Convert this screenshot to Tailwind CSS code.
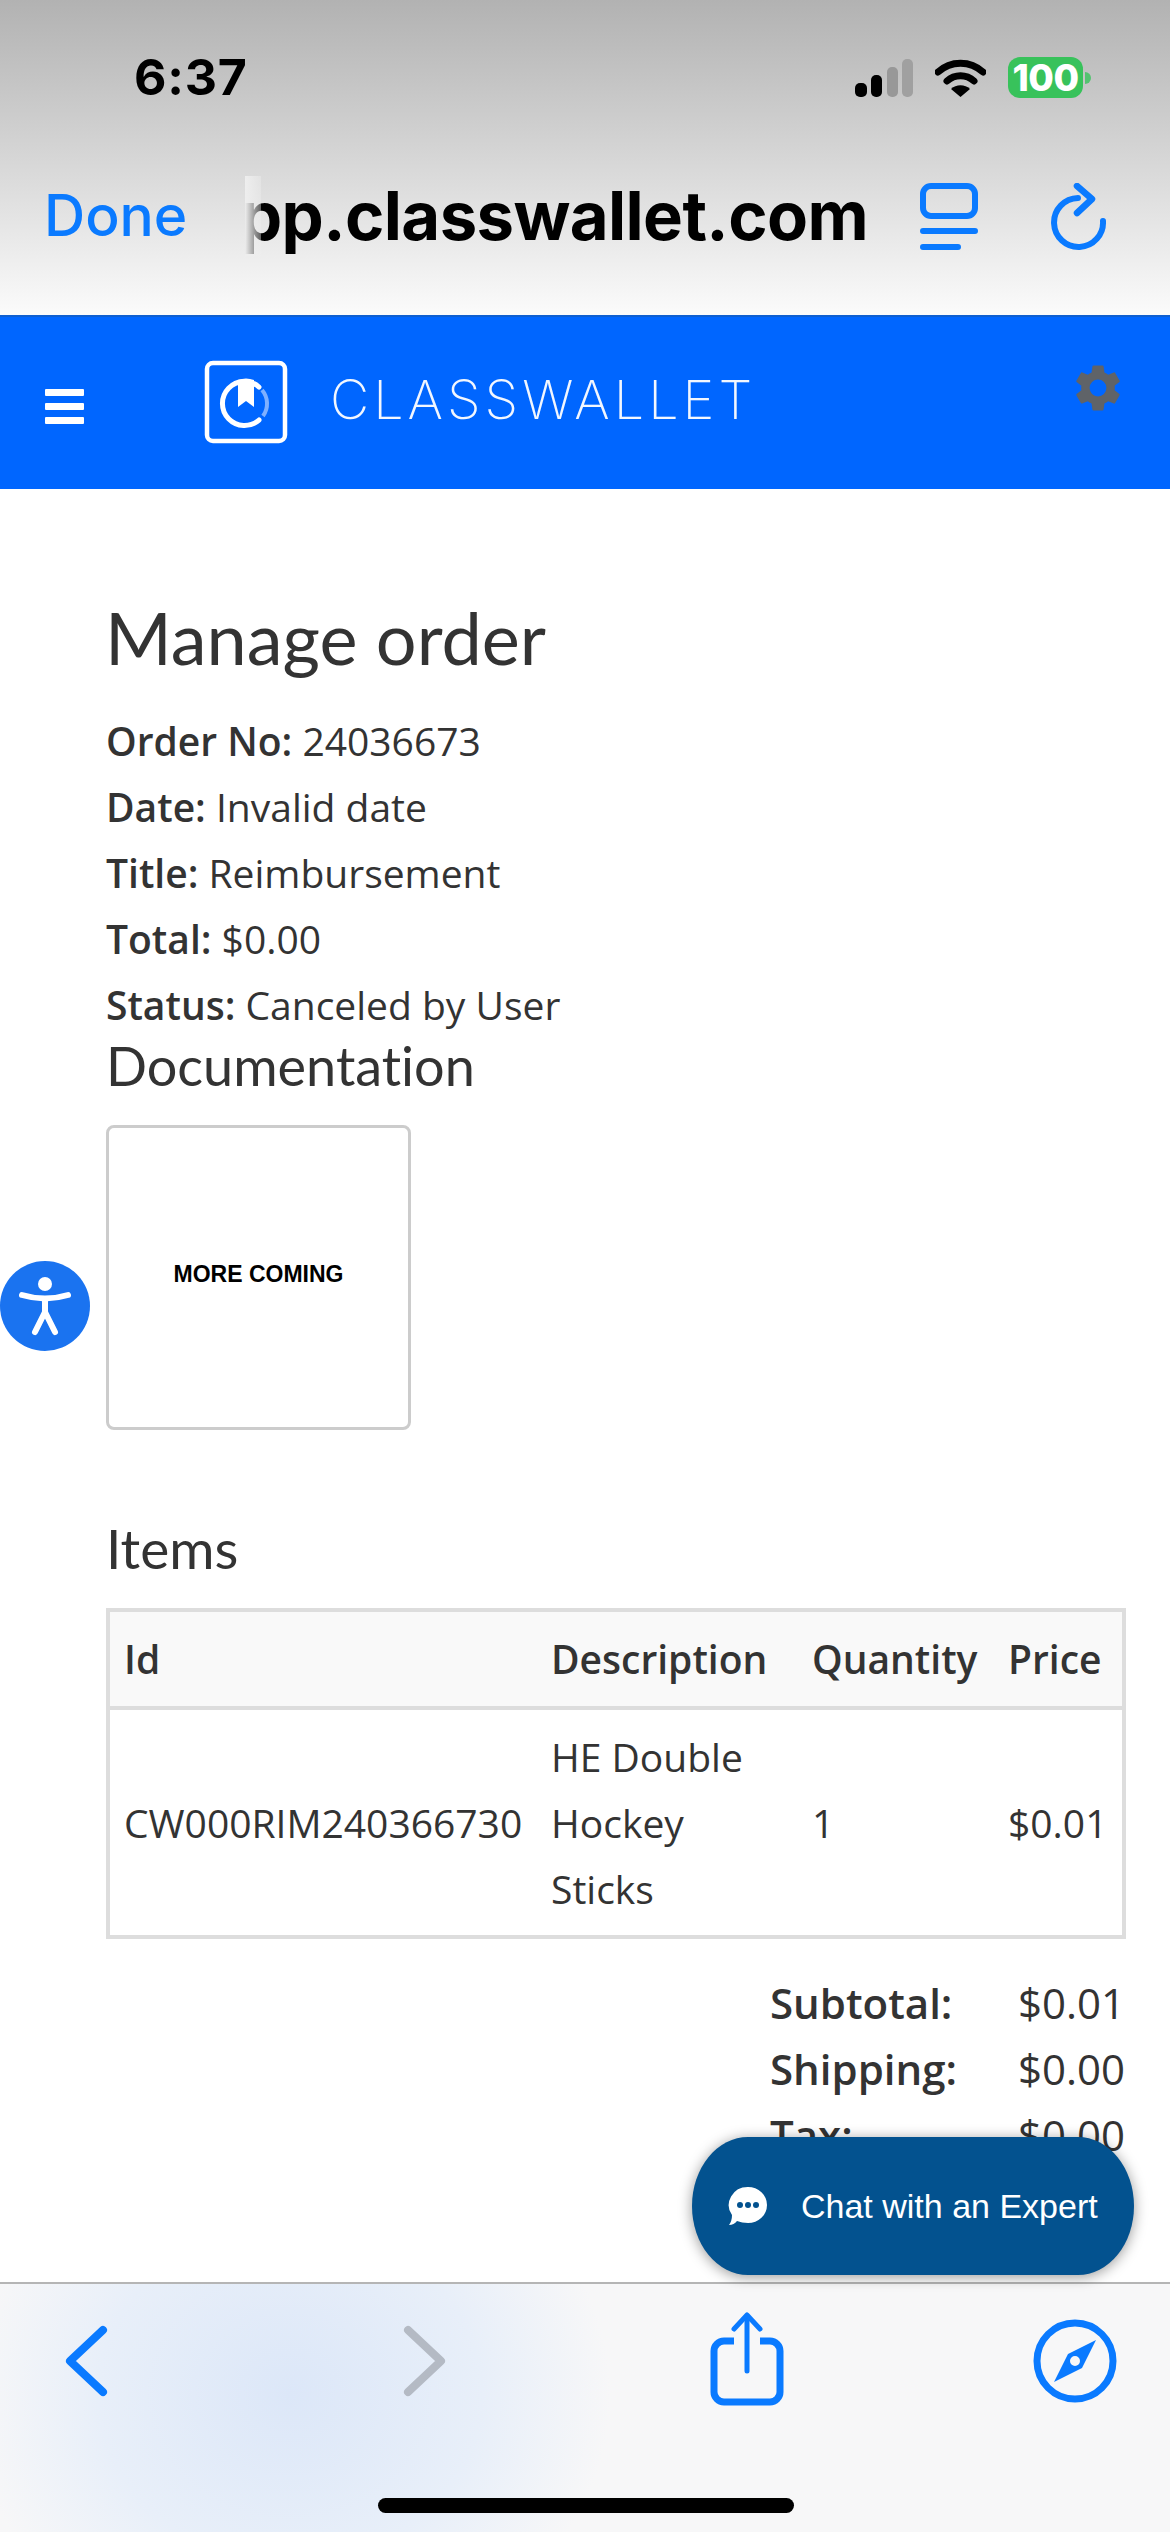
<!DOCTYPE html>
<html lang="en">
<head>
    <meta charset="UTF-8">
    <meta name="viewport" content="width=device-width, initial-scale=1.0">
    <title>Manage order</title>
    <script src="https://cdn.jsdelivr.net/npm/@tailwindcss/browser@4"></script>
</head>
<body class="bg-white">
<div class="relative w-[1170px] h-[2532px] overflow-hidden flex flex-col font-['Open_Sans',sans-serif] text-[#333]">

    <!-- safari sheet header -->
    <div class="h-[315px] shrink-0 bg-gradient-to-b from-[#b2b2b2] to-[#fbfbfb] font-['Inter',sans-serif]">
        <div class="h-[155px] flex items-start justify-between pl-[134px] pr-[79px] pt-[50px]">
            <span class="text-[50px] leading-[54px] font-bold text-black tracking-[0.8px]">6:37</span>
            <div class="flex items-center gap-[22px] pt-[7px]">
                <svg width="58" height="38" viewBox="0 0 58 38">
                    <rect x="0" y="24" width="12" height="14" rx="5" fill="#000"/>
                    <rect x="16" y="16" width="11" height="22" rx="5" fill="#000"/>
                    <rect x="32" y="8" width="11" height="30" rx="5" fill="#989898"/>
                    <rect x="47" y="0" width="11" height="38" rx="5" fill="#a0a0a0"/>
                </svg>
                <svg width="51" height="38" viewBox="0 0 51 38">
                    <path d="M3 13 A33 33 0 0 1 48 13" fill="none" stroke="#000" stroke-width="7" stroke-linecap="round"/>
                    <path d="M12 22 A20 20 0 0 1 39 22" fill="none" stroke="#000" stroke-width="7" stroke-linecap="round"/>
                    <path d="M25.500 38 L16 30 A14 14 0 0 1 35 30 Z" fill="#000"/>
                </svg>
                <div class="flex items-center">
                    <div class="w-[75px] h-[41px] rounded-[12px] bg-[#38c25b] text-white text-[37px] leading-[41px] font-extrabold text-center tracking-[-0.5px]">100</div>
                    <div class="w-[6px] h-[12px] ml-[2px] rounded-r-[6px] bg-[#38c25b]/80"></div>
                </div>
            </div>
        </div>
        <div class="h-[122px] flex items-center pl-[44px]">
            <span class="text-[57px] font-medium text-[#0a7aff] w-[201px] shrink-0">Done</span>
            <div class="relative w-[623px] shrink-0 overflow-hidden flex justify-end">
                <span class="shrink-0 text-[67px] leading-[80px] font-bold text-black tracking-[-0.6px]">app.classwallet.com</span>
                <div class="absolute left-0 top-0 h-full w-[16px] bg-gradient-to-r from-[#eeeeee] to-[#eeeeee]/40"></div>
            </div>
            <svg class="ml-[52px] shrink-0" width="58" height="67" viewBox="0 0 58 67">
                <rect x="3" y="3" width="52" height="30" rx="8" fill="none" stroke="#0a7aff" stroke-width="6"/>
                <path d="M3 48 H55 M3 64 H38" stroke="#0a7aff" stroke-width="6" stroke-linecap="round"/>
            </svg>
            <svg class="ml-[73px] shrink-0" width="56" height="67" viewBox="0 0 56 67">
                <path d="M27 15 A24.500 24.500 0 1 0 52 38" fill="none" stroke="#0a7aff" stroke-width="6" stroke-linecap="round"/>
                <path d="M26 3 L41 16 L26 30" fill="none" stroke="#0a7aff" stroke-width="6.500" stroke-linecap="round" stroke-linejoin="round"/>
            </svg>
        </div>
    </div>

    <!-- app header -->
    <div class="h-[174px] shrink-0 bg-[#0066ff] border-t-[2px] border-[#0f5fd0] flex items-start relative">
        <div class="ml-[45px] mt-[72px] w-[39px] flex flex-col gap-[7px]">
            <div class="h-[7px] bg-white rounded-[1px]"></div>
            <div class="h-[7px] bg-white rounded-[1px]"></div>
            <div class="h-[7px] bg-white rounded-[1px]"></div>
        </div>
        <svg class="ml-[120px] mt-[43px]" width="84" height="84" viewBox="0 0 84 84">
            <rect x="3" y="3" width="78" height="78" rx="6" fill="none" stroke="#fff" stroke-width="4.500"/>
            <path d="M55 60 A22 22 0 1 1 55 27" fill="none" stroke="#fff" stroke-width="5" stroke-linecap="round"/>
            <path d="M58 30 A21 21 0 0 1 59 56" fill="none" stroke="#7fb0ff" stroke-width="4"/>
            <path d="M34 20 Q42 17 50 20 V47 L42 41 L34 47 Z" fill="#fff"/>
        </svg>
        <span class="ml-[42px] mt-[51px] text-[54px] leading-[64px] font-['Inter',sans-serif] font-extralight text-white/95 tracking-[4px]">CLASSWALLET</span>
        <svg class="absolute left-[1070px] top-[43px]" width="56" height="56" viewBox="0 0 24 24">
            <path fill="#5f6368" fill-rule="evenodd" d="M19.140 12.940c.040-.300.060-.610.060-.940 0-.320-.020-.640-.070-.940l2.030-1.580a.490.490 0 0 0 .120-.610l-1.920-3.320a.490.490 0 0 0-.590-.220l-2.390.960c-.500-.380-1.030-.700-1.620-.940l-.360-2.540a.480.480 0 0 0-.480-.410h-3.840a.470.470 0 0 0-.470.410l-.360 2.540c-.590.240-1.130.570-1.620.940l-2.390-.960a.480.480 0 0 0-.590.220L2.740 8.870a.480.480 0 0 0 .120.610l2.030 1.580c-.050.300-.090.630-.09.940s.020.640.07.940l-2.030 1.580a.490.490 0 0 0-.120.610l1.920 3.320c.120.220.370.290.590.220l2.390-.960c.500.380 1.030.700 1.620.940l.360 2.540c.050.240.240.410.480.410h3.840c.240 0 .440-.170.470-.410l.360-2.540c.590-.240 1.130-.560 1.620-.940l2.390.960c.220.080.470 0 .590-.220l1.920-3.320a.480.480 0 0 0-.120-.610l-2.010-1.580zM12 15.600A3.600 3.600 0 1 1 12 8.400a3.600 3.600 0 0 1 0 7.200z"/>
        </svg>
    </div>

    <!-- page body -->
    <div class="flex-1 min-h-0 overflow-hidden pl-[106px] pr-[44px] pt-[98px]">
        <h1 class="text-[72px] leading-[100px] font-['Lato',sans-serif] font-normal ml-[-1px]">Manage order</h1>
        <div class="mt-[21px] text-[39px] leading-[66px]">
            <div><b class="font-semibold">Order No:</b> 24036673</div>
            <div><b class="font-semibold">Date:</b> Invalid date</div>
            <div><b class="font-semibold">Title:</b> Reimbursement</div>
            <div><b class="font-semibold">Total:</b> $0.00</div>
            <div><b class="font-semibold">Status:</b> Canceled by User</div>
        </div>
        <h2 class="text-[54px] leading-[58px] font-['Lato',sans-serif] font-normal mt-[-1px] [font-variant-ligatures:none]">Documentation</h2>
        <div class="mt-[30px] w-[305px] h-[305px] rounded-[8px] border-[3px] border-[#ccc] flex justify-center pt-[132px]">
            <span class="font-['Liberation_Sans',sans-serif] font-bold text-[23px] leading-[28px] text-black">MORE COMING</span>
        </div>
        <h3 class="mt-[85px] text-[55px] leading-[66px] font-['Lato',sans-serif] font-normal">Items</h3>
        <table class="mt-[27px] w-[1020px] border-collapse border-[4px] border-[#ddd] text-[39px] leading-[66px]">
            <thead class="bg-[#f9f9f9]">
                <tr class="border-b-[4px] border-[#ddd] h-[98px]">
                    <th class="text-left font-semibold pl-[14px] w-[443px]">Id</th>
                    <th class="text-left font-semibold w-[261px]">Description</th>
                    <th class="text-left font-semibold w-[196px]">Quantity</th>
                    <th class="text-left font-semibold">Price</th>
                </tr>
            </thead>
            <tbody>
                <tr class="h-[229px]">
                    <td class="pl-[14px]">CW000RIM240366730</td>
                    <td>HE Double<br>Hockey<br>Sticks</td>
                    <td>1</td>
                    <td>$0.01</td>
                </tr>
            </tbody>
        </table>
        <div class="mt-[31px] ml-[664px] w-[355px] grid grid-cols-[auto_1fr] text-[42px] leading-[66px]">
            <b class="font-semibold">Subtotal:</b><span class="text-right">$0.01</span>
            <b class="font-semibold">Shipping:</b><span class="text-right">$0.00</span>
            <b class="font-semibold">Tax:</b><span class="text-right">$0.00</span>
        </div>
    </div>

    <!-- safari bottom toolbar -->
    <div class="relative h-[250px] shrink-0 border-t-[2px] border-[#b5b5b5] bg-[#f7f7f8] bg-[radial-gradient(ellipse_320px_280px_at_290px_110px,#dce7f8_0%,#e8eff9_60%,#f7f7f8_100%)]">
        <div class="flex items-start">
            <svg class="ml-[64px] mt-[41px]" width="44" height="72" viewBox="0 0 44 72">
                <path d="M39 5 L6 36 L39 67" fill="none" stroke="#0a7aff" stroke-width="8" stroke-linecap="round" stroke-linejoin="round"/>
            </svg>
            <svg class="ml-[295px] mt-[41px]" width="44" height="72" viewBox="0 0 44 72">
                <path d="M5 5 L38 36 L5 67" fill="none" stroke="#b4bac4" stroke-width="8" stroke-linecap="round" stroke-linejoin="round"/>
            </svg>
            <svg class="ml-[263px] mt-[28px]" width="74" height="94" viewBox="0 0 74 94">
                <path d="M24 29 H14 A10 10 0 0 0 4 39 V80 A10 10 0 0 0 14 90 H60 A10 10 0 0 0 70 80 V39 A10 10 0 0 0 60 29 H50" fill="none" stroke="#0a7aff" stroke-width="7"/>
                <path d="M37 4 V59" stroke="#0a7aff" stroke-width="5" stroke-linecap="round"/>
                <path d="M24 17 L37 3 L50 17" fill="none" stroke="#0a7aff" stroke-width="5" stroke-linecap="round" stroke-linejoin="round"/>
            </svg>
            <svg class="ml-[249px] mt-[35px]" width="84" height="84" viewBox="0 0 84 84">
                <circle cx="42" cy="42" r="38" fill="none" stroke="#0a7aff" stroke-width="7"/>
                <path fill-rule="evenodd" fill="#0a7aff" d="M63 21 L49 49 L21 63 L35 35 Z M42 37 A5 5 0 1 0 42 47 A5 5 0 1 0 42 37 Z"/>
            </svg>
        </div>
        <div class="absolute left-[378px] top-[214px] w-[416px] h-[15px] rounded-full bg-black"></div>
    </div>

    <!-- floating widgets -->
    <div class="absolute left-0 top-[1261px] w-[90px] h-[90px] rounded-full bg-[#1a73f0] flex items-center justify-center">
        <svg width="64" height="64" viewBox="0 0 64 64">
            <circle cx="32" cy="10" r="7" fill="#fff"/>
            <path d="M9 21 Q32 28 55 21 M32 25 V38 M32 38 L22 58 M32 38 L42 58" fill="none" stroke="#fff" stroke-width="6" stroke-linecap="round" stroke-linejoin="round"/>
        </svg>
    </div>
    <div class="absolute left-[692px] top-[2137px] w-[442px] h-[138px] rounded-[56px/69px] bg-[#03528f] shadow-[0_2px_14px_rgba(0,0,0,0.4)] flex items-center pl-[36px] gap-[33px]">
        <svg width="40" height="40" viewBox="0 0 40 40">
            <path fill="#fff" d="M20 1 A19 18 0 0 1 20 37 Q14 37 9 35 Q6 39 1 39 Q4 35 4 29 A19 18 0 0 1 20 1 Z"/>
            <circle cx="12" cy="19" r="3" fill="#03528f"/>
            <circle cx="20" cy="19" r="3" fill="#03528f"/>
            <circle cx="28" cy="19" r="3" fill="#03528f"/>
        </svg>
        <span class="font-['Liberation_Sans',sans-serif] text-[34px] text-white">Chat with an Expert</span>
    </div>
</div>
</body>
</html>
